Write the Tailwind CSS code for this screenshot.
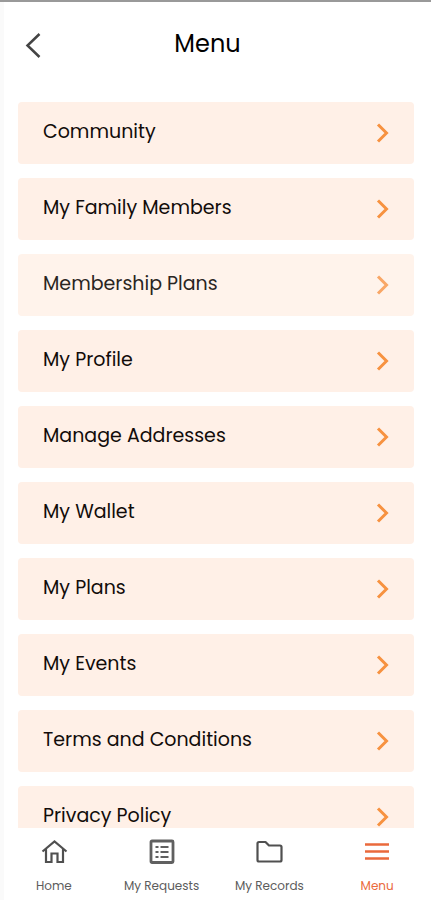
<!DOCTYPE html>
<html lang="en">
<head>
    <meta charset="UTF-8">
    <meta name="viewport" content="width=device-width, initial-scale=1.0">
    <title>Menu</title>
    <script src="https://cdn.jsdelivr.net/npm/@tailwindcss/browser@4"></script>
</head>
<body class="bg-white font-['Poppins','Inter',sans-serif] text-[#120c0a]">
    <div class="flex h-screen flex-col border-t-2 border-[#999999] shadow-[inset_4px_0_0_#fafafa]">
        <!-- Header -->
        <header class="grid shrink-0 grid-cols-[64px_1fr_80px] items-center pt-5 pb-9">
            <button type="button" aria-label="Back" class="flex h-11 items-center pt-0.5 pl-6">
                <svg class="h-7 w-5" viewBox="0 0 20 28" fill="none" stroke="#444444" stroke-width="2.5">
                    <path d="M15.5 3 3.5 14.5 15.5 26" />
                </svg>
            </button>
            <h1 class="text-center text-2xl text-black">Menu</h1>
        </header>

        <!-- Menu list -->
        <main class="min-h-0 flex-1 overflow-y-auto pr-[17px] pl-[18px] [scrollbar-width:none]">
            <ul class="flex flex-col gap-[14px] text-[19px] leading-6">
                <li>
                    <a href="#" class="flex h-[62px] items-center justify-between rounded bg-[#fff0e7] pr-6 pl-[25px]">
                        <span class="pb-0.5">Community</span>
                        <svg class="h-5 w-[14px]" viewBox="0 0 14 20" fill="none" stroke="#f79240" stroke-width="3"><path d="m2 1.5 8.5 8.5L2 18.5" /></svg>
                    </a>
                </li>
                <li>
                    <a href="#" class="flex h-[62px] items-center justify-between rounded bg-[#fff0e7] pr-6 pl-[25px]">
                        <span class="pb-0.5">My Family Members</span>
                        <svg class="h-5 w-[14px]" viewBox="0 0 14 20" fill="none" stroke="#f79240" stroke-width="3"><path d="m2 1.5 8.5 8.5L2 18.5" /></svg>
                    </a>
                </li>
                <li>
                    <a href="#" class="flex h-[62px] items-center justify-between rounded bg-[#fff3eb] pr-6 pl-[25px] text-[#2a2522]">
                        <span class="pb-0.5">Membership Plans</span>
                        <svg class="h-5 w-[14px]" viewBox="0 0 14 20" fill="none" stroke="#f9a766" stroke-width="3"><path d="m2 1.5 8.5 8.5L2 18.5" /></svg>
                    </a>
                </li>
                <li>
                    <a href="#" class="flex h-[62px] items-center justify-between rounded bg-[#fff0e7] pr-6 pl-[25px]">
                        <span class="pb-0.5">My Profile</span>
                        <svg class="h-5 w-[14px]" viewBox="0 0 14 20" fill="none" stroke="#f79240" stroke-width="3"><path d="m2 1.5 8.5 8.5L2 18.5" /></svg>
                    </a>
                </li>
                <li>
                    <a href="#" class="flex h-[62px] items-center justify-between rounded bg-[#fff0e7] pr-6 pl-[25px]">
                        <span class="pb-0.5">Manage Addresses</span>
                        <svg class="h-5 w-[14px]" viewBox="0 0 14 20" fill="none" stroke="#f79240" stroke-width="3"><path d="m2 1.5 8.5 8.5L2 18.5" /></svg>
                    </a>
                </li>
                <li>
                    <a href="#" class="flex h-[62px] items-center justify-between rounded bg-[#fff0e7] pr-6 pl-[25px]">
                        <span class="pb-0.5">My Wallet</span>
                        <svg class="h-5 w-[14px]" viewBox="0 0 14 20" fill="none" stroke="#f79240" stroke-width="3"><path d="m2 1.5 8.5 8.5L2 18.5" /></svg>
                    </a>
                </li>
                <li>
                    <a href="#" class="flex h-[62px] items-center justify-between rounded bg-[#fff0e7] pr-6 pl-[25px]">
                        <span class="pb-0.5">My Plans</span>
                        <svg class="h-5 w-[14px]" viewBox="0 0 14 20" fill="none" stroke="#f79240" stroke-width="3"><path d="m2 1.5 8.5 8.5L2 18.5" /></svg>
                    </a>
                </li>
                <li>
                    <a href="#" class="flex h-[62px] items-center justify-between rounded bg-[#fff0e7] pr-6 pl-[25px]">
                        <span class="pb-0.5">My Events</span>
                        <svg class="h-5 w-[14px]" viewBox="0 0 14 20" fill="none" stroke="#f79240" stroke-width="3"><path d="m2 1.5 8.5 8.5L2 18.5" /></svg>
                    </a>
                </li>
                <li>
                    <a href="#" class="flex h-[62px] items-center justify-between rounded bg-[#fff0e7] pr-6 pl-[25px]">
                        <span class="pb-0.5">Terms and Conditions</span>
                        <svg class="h-5 w-[14px]" viewBox="0 0 14 20" fill="none" stroke="#f79240" stroke-width="3"><path d="m2 1.5 8.5 8.5L2 18.5" /></svg>
                    </a>
                </li>
                <li>
                    <a href="#" class="flex h-[62px] items-center justify-between rounded bg-[#fff0e7] pr-6 pl-[25px]">
                        <span class="pb-0.5">Privacy Policy</span>
                        <svg class="h-5 w-[14px]" viewBox="0 0 14 20" fill="none" stroke="#f79240" stroke-width="3"><path d="m2 1.5 8.5 8.5L2 18.5" /></svg>
                    </a>
                </li>
            </ul>
        </main>

        <!-- Bottom navigation -->
        <nav class="grid shrink-0 grid-cols-4 pt-[10px] pb-[6px] text-xs leading-4 text-[#5c5c5c]">
            <a href="#" class="flex flex-col items-center gap-3">
                <svg class="size-7" viewBox="0 0 28 28" fill="none" stroke="#505050" stroke-width="2.2">
                    <path d="M2.5 13.5 14.5 3.5 26.500 13.5M6 11V24H11.500V15.500H17.500V24H23V11" />
                </svg>
                <span>Home</span>
            </a>
            <a href="#" class="flex flex-col items-center gap-3">
                <svg class="size-7" viewBox="0 0 28 28" fill="none" stroke="#606060" stroke-width="2">
                    <rect x="3" y="3" width="22" height="21.5" rx="1" stroke-width="2.8" />
                    <path d="M7.500 9h3M7.500 14h3M7.500 19h3M12.500 9h8M12.500 14h8M12.500 19h8" />
                </svg>
                <span>My Requests</span>
            </a>
            <a href="#" class="flex flex-col items-center gap-3">
                <svg class="size-7" viewBox="0 0 28 28" fill="none" stroke="#505050" stroke-width="2.2" stroke-linejoin="round">
                    <path d="M4 4H10.500L14 7.500H25q1.500 0 1.500 1.500V22q0 1.500-1.500 1.500H4Q2.500 23.500 2.500 22V5.500Q2.500 4 4 4Z" />
                </svg>
                <span>My Records</span>
            </a>
            <a href="#" aria-current="page" class="flex flex-col items-center gap-3 text-[#ea6a3c]">
                <svg class="size-7" viewBox="0 0 28 28" fill="none" stroke="#ea6a3c" stroke-width="2.5">
                    <path d="M2 6.500h24M2 13.500h24M2 20.500h24" />
                </svg>
                <span>Menu</span>
            </a>
        </nav>
    </div>
</body>
</html>
